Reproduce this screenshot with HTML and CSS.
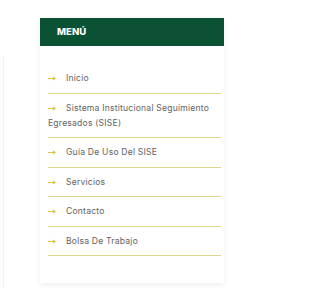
FILE: index.html
```html
<!DOCTYPE html>
<html lang="es">
<head>
<meta charset="utf-8">
<title>Menú</title>
<link rel="stylesheet" href="styles.css">
</head>
<body>
<div class="page">
  <div class="side-edge"></div>
  <aside class="card">
    <div class="card-head">MENÚ</div>
    <ul class="menu">
      <li><svg class="arrow" viewBox="0 0 8 5" aria-hidden="true"><path d="M0 2.5H6.5M5 1L7 2.5L5 4" /></svg>Inicio</li>
      <li><svg class="arrow" viewBox="0 0 8 5" aria-hidden="true"><path d="M0 2.5H6.5M5 1L7 2.5L5 4" /></svg>Sistema Institucional Seguimiento Egresados (SISE)</li>
      <li><svg class="arrow" viewBox="0 0 8 5" aria-hidden="true"><path d="M0 2.5H6.5M5 1L7 2.5L5 4" /></svg>Guía De Uso Del SISE</li>
      <li><svg class="arrow" viewBox="0 0 8 5" aria-hidden="true"><path d="M0 2.5H6.5M5 1L7 2.5L5 4" /></svg>Servicios</li>
      <li><svg class="arrow" viewBox="0 0 8 5" aria-hidden="true"><path d="M0 2.5H6.5M5 1L7 2.5L5 4" /></svg>Contacto</li>
      <li><svg class="arrow" viewBox="0 0 8 5" aria-hidden="true"><path d="M0 2.5H6.5M5 1L7 2.5L5 4" /></svg>Bolsa De Trabajo</li>
    </ul>
  </aside>
</div>
</body>
</html>
```
FILE: styles.css
```css
html, body {
  margin: 0;
  padding: 0;
  background: #ffffff;
}
.page {
  display: flex;
  align-items: flex-start;
  width: 288px;
  height: 288px;
  overflow: hidden;
  font-family: Inter, "Noto Sans", sans-serif;
}
.side-edge {
  width: 3px;
  height: 240px;
  margin-top: 56px;
  border-right: 1px solid #f2f2f2;
  flex: none;
}
.card {
  margin-left: 36px;
  margin-top: 18px;
  width: 184px;
  background: #fff;
  box-shadow: 0 2px 6px rgba(0, 0, 0, 0.07);
  padding-bottom: 27px;
  flex: none;
}
.card-head {
  background: #0b5234;
  color: #fff;
  font-weight: 800;
  font-size: 9.5px;
  height: 28px;
  line-height: 28px;
  padding-left: 17px;
  letter-spacing: 0.1px;
}
.menu {
  list-style: none;
  margin: 18px 3px 0 8px;
  padding: 0;
}
.menu li {
  font-size: 8.6px;
  line-height: 15px;
  color: #626262;
  padding: 7px 0 7px 0;
  border-bottom: 1px solid #dcd690;
  letter-spacing: 0.2px;
}
.menu li:nth-child(even) {
  padding-bottom: 6px;
}
.arrow {
  display: inline-block;
  width: 8px;
  height: 5px;
  margin: 0 10px 1px 0;
  vertical-align: middle;
  fill: none;
  stroke: #e2c246;
  stroke-width: 1.2;
}
```
